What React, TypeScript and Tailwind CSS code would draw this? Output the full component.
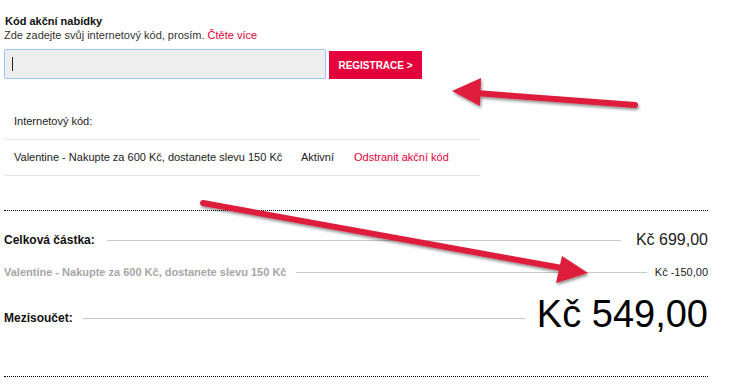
import React from 'react';

const red = 'text-[#e4003a]';

function Arrows() {
  return (
    <svg
      className="pointer-events-none absolute left-0 top-0"
      width={737}
      height={389}
      viewBox="0 0 737 389"
    >
      <defs>
        <filter id="shadow" x="-10%" y="-50%" width="120%" height="200%">
          <feDropShadow dx="1" dy="2" stdDeviation="1.5" floodColor="#000" floodOpacity="0.45" />
        </filter>
      </defs>
      <g fill="#de1d3b" stroke="#de1d3b" filter="url(#shadow)">
        <line x1={635} y1={105} x2={476} y2={93} strokeWidth={6} strokeLinecap="round" />
        <polygon points="452,91 481,78 480,106" stroke="none" />
        <line x1={203} y1={203} x2={562} y2={268} strokeWidth={6} strokeLinecap="round" />
        <polygon points="588,273 562,256 556,283" stroke="none" />
      </g>
    </svg>
  );
}

function SummaryRow({
  label,
  value,
  labelClass,
  valueClass,
  lineClass,
}: {
  label: string;
  value: string;
  labelClass: string;
  valueClass: string;
  lineClass: string;
}) {
  return (
    <div className="flex items-center">
      <span className={`whitespace-nowrap font-bold ${labelClass}`}>{label}</span>
      <div className={`h-px flex-1 bg-[#c8c8c8] ${lineClass}`} />
      <span className={`whitespace-nowrap ${valueClass}`}>{value}</span>
    </div>
  );
}

export default function App() {
  return (
    <div className="relative h-[389px] w-[737px] overflow-hidden bg-white font-['Liberation_Sans',Arial,sans-serif] text-[#222]">
      <div className="pl-[4px] pt-[14px]">
        <div className="w-[476px]">
          <div className="pl-px text-[11px] font-bold leading-[14px] text-[#111]">Kód akční nabídky</div>
          <div className="text-[11px] leading-[14px] text-[#333]">
            Zde zadejte svůj internetový kód, prosím. <span className={red}>Čtěte více</span>
          </div>

          <div className="mt-[7px] flex items-end">
            <div className="flex h-[30px] w-[322px] items-center rounded-[2px] border border-[#9ec3f5] bg-[#eeeeee] pl-[7px]">
              <span className="h-[14px] w-px bg-[#222]" />
            </div>
            <button className="ml-[3px] h-[28px] w-[93px] bg-[#e4003a] text-[10px] font-bold text-white">
              REGISTRACE &gt;
            </button>
          </div>

          <div className="mt-[25px] flex h-[36px] items-center border-b border-[#e6e6e6] pl-[10px] text-[11px]">
            Internetový kód:
          </div>
          <div className="flex h-[36px] items-center border-b border-[#e6e6e6] pl-[10px] text-[11px]">
            <span className="w-[287px]">Valentine - Nakupte za 600 Kč, dostanete slevu 150 Kč</span>
            <span className="w-[53px]">Aktivní</span>
            <span className={red}>Odstranit akční kód</span>
          </div>
        </div>

        <div className="mt-[34px] w-[704px] border-t border-dotted border-black">
          <div className="mt-[19px] flex h-[20px] flex-col justify-center">
            <SummaryRow
              label="Celková částka:"
              value="Kč 699,00"
              labelClass="text-[12px] text-[#111]"
              lineClass="ml-[12px] mr-[15px]"
              valueClass="text-[16px] text-[#222]"
            />
          </div>
          <div className="mt-[12px] flex h-[20px] flex-col justify-center">
            <SummaryRow
              label="Valentine - Nakupte za 600 Kč, dostanete slevu 150 Kč"
              value="Kč -150,00"
              labelClass="text-[11px] text-[#a6a6a6]"
              lineClass="ml-[10px] mr-[8px]"
              valueClass="text-[11px] text-[#222]"
            />
          </div>
          <div className="mt-[14px] flex h-[44px] flex-col justify-center">
            <SummaryRow
              label="Mezisoučet:"
              value="Kč 549,00"
              labelClass="text-[12px] text-[#111]"
              lineClass="ml-[10px] mr-[12px]"
              valueClass="mb-[9px] text-[38px] leading-none text-black"
            />
          </div>
          <div className="mt-[36px] border-t border-dotted border-black" />
        </div>
      </div>
      <Arrows />
    </div>
  );
}
